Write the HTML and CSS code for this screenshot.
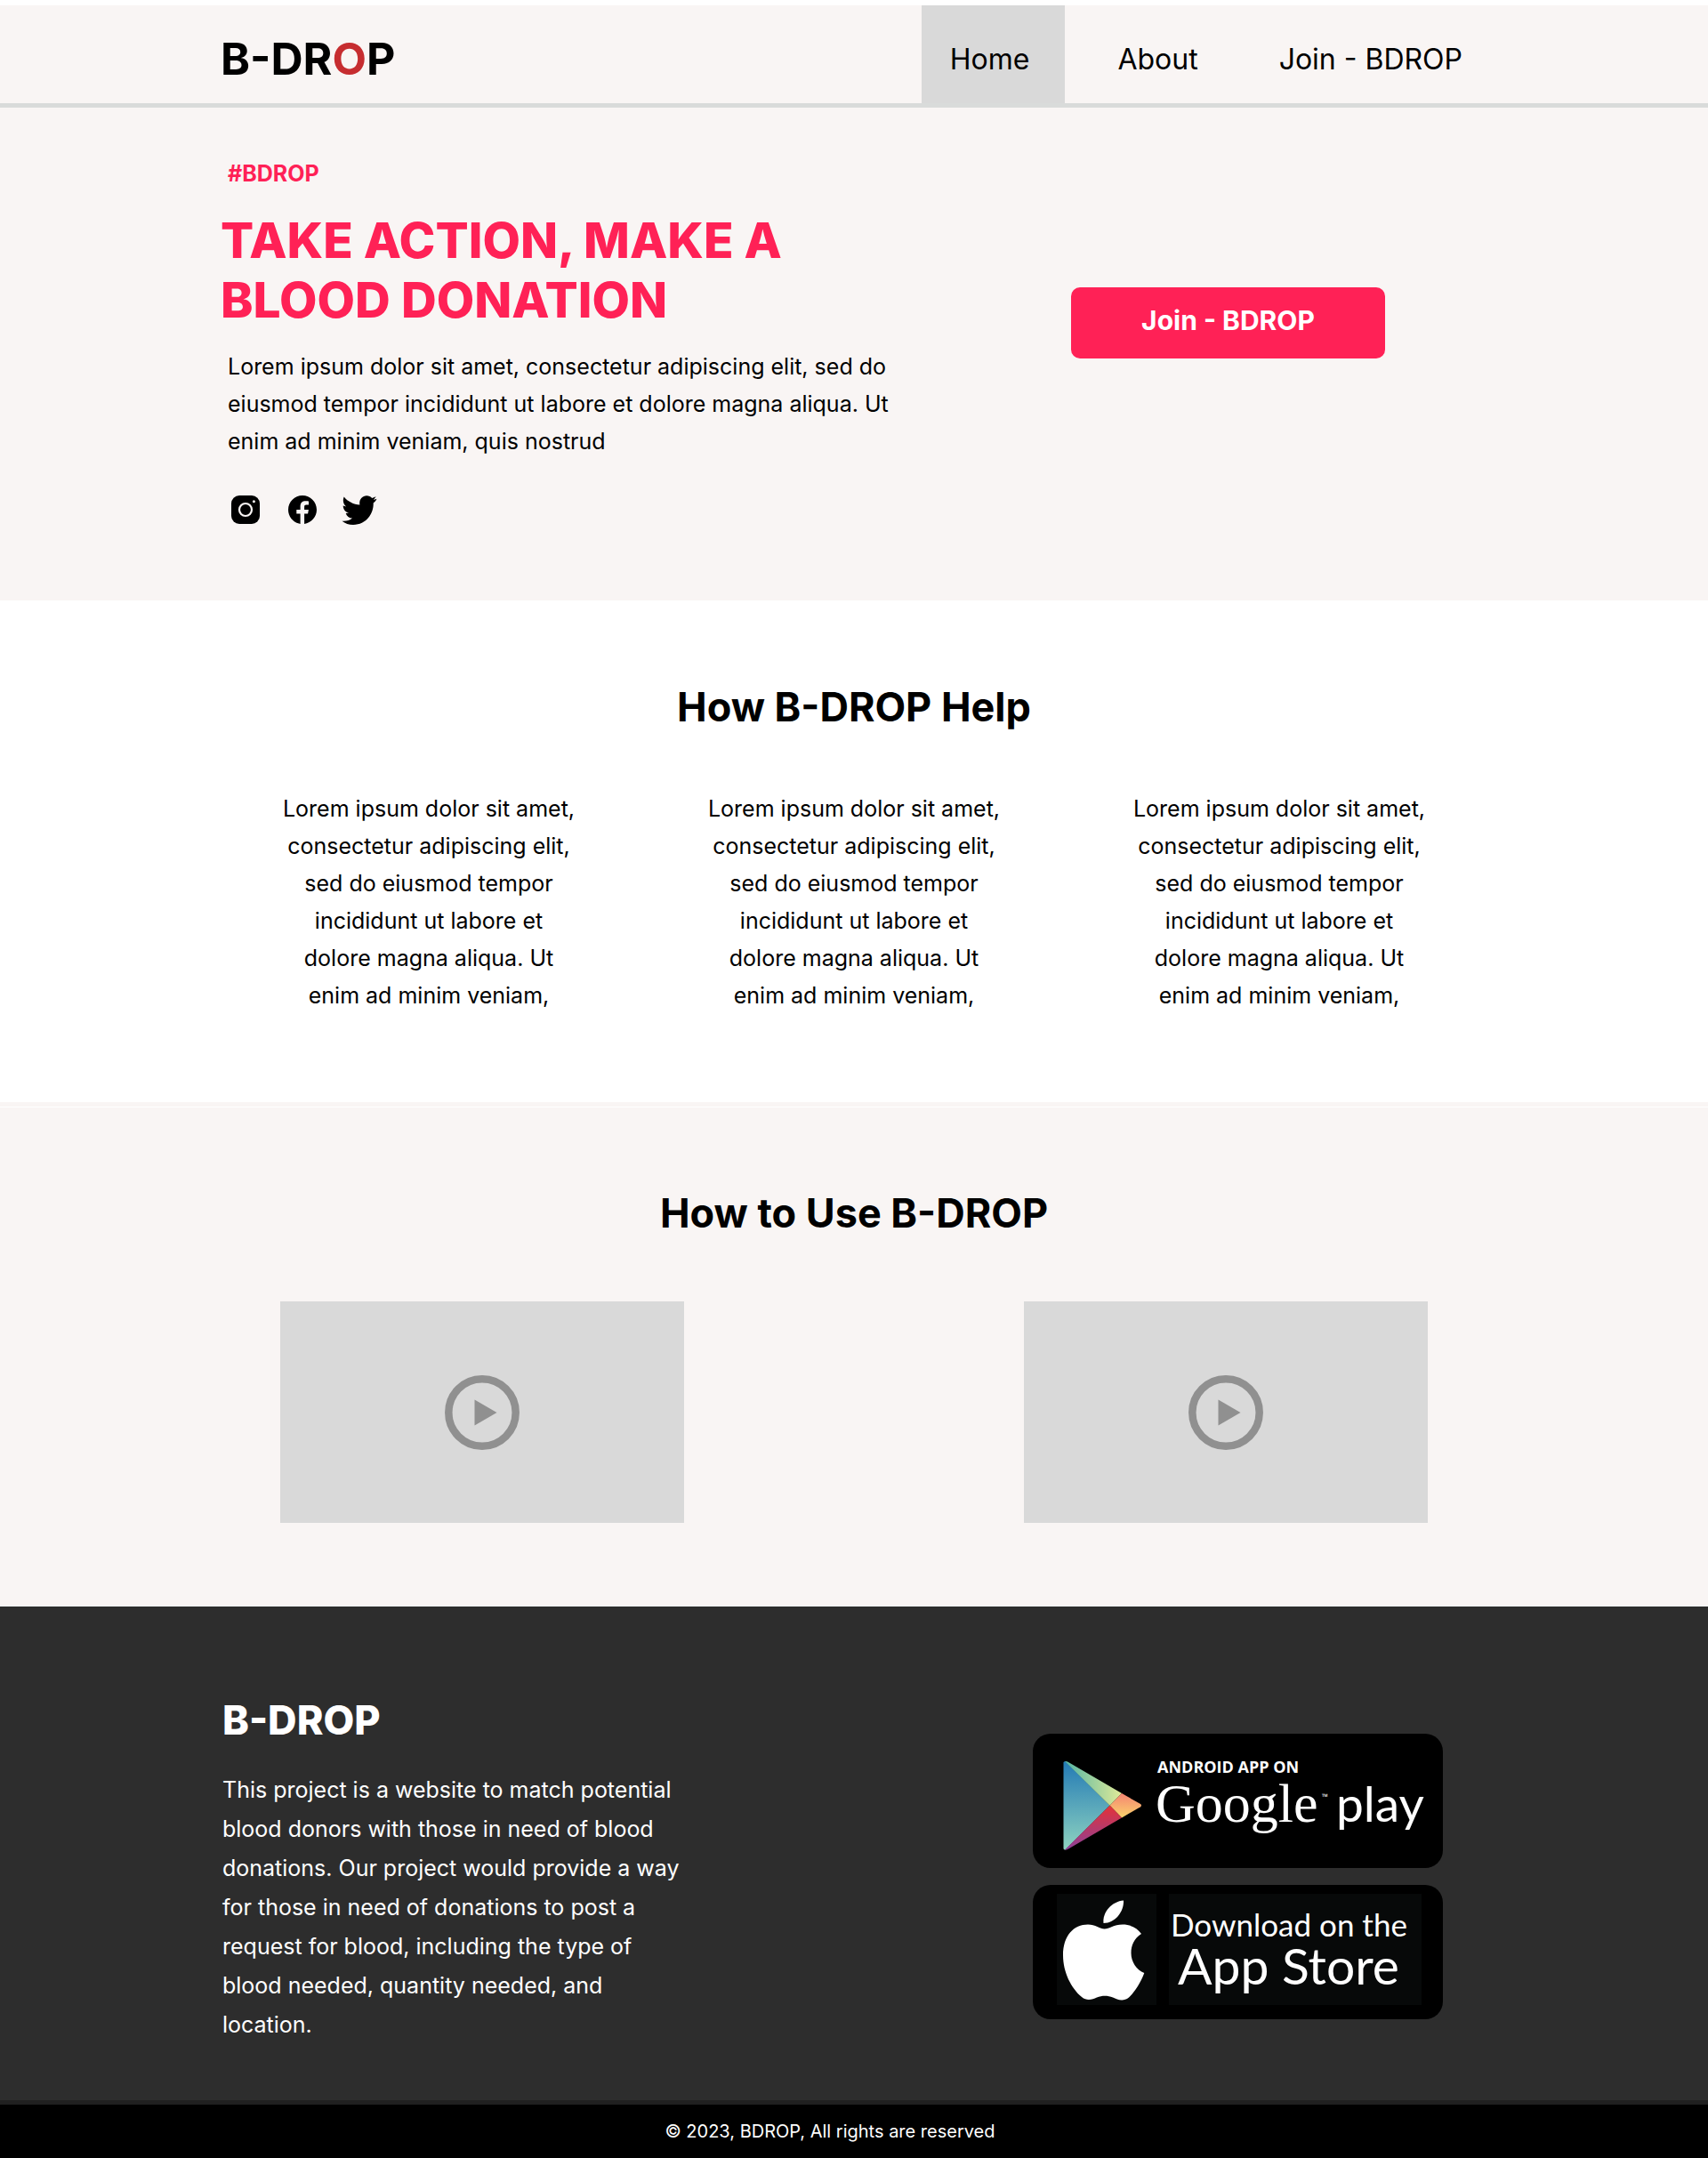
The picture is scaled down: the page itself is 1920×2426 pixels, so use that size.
FILE: index.html
```html
<!DOCTYPE html>
<html lang="en">
<head>
<meta charset="utf-8">
<meta name="viewport" content="width=device-width, initial-scale=1">
<title>B-DROP</title>
<link rel="stylesheet" href="styles.css">
</head>
<body>
<header class="header">
  <div class="container header-row">
    <a class="logo" href="#">B-DR<span class="logo-drop">O</span>P</a>
    <nav class="nav">
      <a class="nav-link nav-link-active" href="#">Home</a>
      <a class="nav-link" href="#help">About</a>
      <a class="nav-link nav-link-join" href="#join">Join - BDROP</a>
    </nav>
  </div>
</header>
<main>
  <section class="hero">
    <div class="container hero-grid">
      <div>
        <p class="tag">#BDROP</p>
        <h1 class="hero-title">TAKE ACTION, MAKE A BLOOD DONATION</h1>
        <p class="hero-text">Lorem ipsum dolor sit amet, consectetur adipiscing elit, sed do eiusmod tempor incididunt ut labore et dolore magna aliqua. Ut enim ad minim veniam, quis nostrud</p>
        <div class="social">
          <a href="#" aria-label="Instagram"><svg class="social-icon" viewBox="0 0 40 40"><rect x="4" y="4" width="32" height="32" rx="9"/><circle cx="20" cy="20" r="7" fill="none" stroke="#f9f5f4" stroke-width="2.2"/><circle cx="29.4" cy="10.8" r="1.5" fill="#f9f5f4"/></svg></a>
          <a href="#" aria-label="Facebook"><svg class="social-icon" viewBox="0 0 40 40"><path d="M36 20.1C36 11.2 28.8 4 20 4S4 11.2 4 20.1c0 7.5 5.100 13.800 12 15.500 .5.100 1.100.200 1.600.300V24.600h-4.300v-4.500h4.300v-3.700c0-4.300 2.200-6.200 6-6.200 1.800 0 2.900.200 3.400.300v4h-2.600c-1.700 0-2.300.800-2.300 2.400v3.200h4.800l-.8 4.500h-4v11.300C30 34.900 36 28.200 36 20.100z"/></svg></a>
          <a href="#" aria-label="Twitter"><svg class="social-icon" viewBox="0 0 40 40"><path d="M39.500 7.800 35.900 8.900 38.600 5.200 34.200 6.900C32.700 5.200 30.600 4.200 28.200 4.200c-4.600 0-8 3.800-8 8.300 0 .7.100 1.400.2 2C13.400 14.200 7 11 2.700 5.600 1.200 8.900 1.400 13.500 5.200 16.600L1.700 15.500c0 3.900 2.500 7.100 6.400 8.200l-3.400.2c1 3.200 3.800 5.400 7.300 5.700C9 32.100 5 33.200.500 32.700 4 35.500 8.200 37 13 37c15 0 23.200-12.700 22.700-24.400C37.300 11.400 38.600 9.700 39.500 7.800z"/></svg></a>
        </div>
      </div>
      <div class="hero-action" id="join">
        <button class="join-button" type="button">Join - BDROP</button>
      </div>
    </div>
  </section>
  <section class="help" id="help">
    <h2 class="section-title">How B-DROP Help</h2>
    <div class="inner help-grid">
      <p>Lorem ipsum dolor sit amet, consectetur adipiscing elit, sed do eiusmod tempor incididunt ut labore et dolore magna aliqua. Ut enim ad minim veniam,</p>
      <p>Lorem ipsum dolor sit amet, consectetur adipiscing elit, sed do eiusmod tempor incididunt ut labore et dolore magna aliqua. Ut enim ad minim veniam,</p>
      <p>Lorem ipsum dolor sit amet, consectetur adipiscing elit, sed do eiusmod tempor incididunt ut labore et dolore magna aliqua. Ut enim ad minim veniam,</p>
    </div>
  </section>
  <section class="usage">
    <h2 class="section-title">How to Use B-DROP</h2>
    <div class="inner video-row">
      <button class="video" type="button" aria-label="Play first video"><svg class="play-icon" viewBox="0 0 84 84"><circle cx="42" cy="42" r="37.700" fill="none" stroke="#909090" stroke-width="8.500"/><path d="M33.500 27.500v29L58.500 42z" fill="#909090"/></svg></button>
      <button class="video" type="button" aria-label="Play second video"><svg class="play-icon" viewBox="0 0 84 84"><circle cx="42" cy="42" r="37.700" fill="none" stroke="#909090" stroke-width="8.500"/><path d="M33.500 27.500v29L58.500 42z" fill="#909090"/></svg></button>
    </div>
  </section>
</main>
<footer class="footer">
  <div class="container footer-row">
    <div class="about">
      <h2 class="footer-title">B-DROP</h2>
      <p class="footer-text">This project is a website to match potential blood donors with those in need of blood donations. Our project would provide a way for those in need of donations to post a request for blood, including the type of blood needed, quantity needed, and location.</p>
    </div>
    <div class="stores">
      <a class="store" href="#" aria-label="Android app on Google Play">
        <svg class="store-art" viewBox="0 0 461 151">
          <defs>
            <linearGradient id="blue" x1="0" y1="0" x2="0" y2="1"><stop offset="0" stop-color="#237ab5"/><stop offset="1" stop-color="#8ed3c0"/></linearGradient>
            <linearGradient id="green" x1="0" y1="0" x2="1" y2="0"><stop offset="0" stop-color="#56b6a4"/><stop offset="1" stop-color="#e0ea98"/></linearGradient>
            <linearGradient id="orange" x1="0" y1="0" x2="0" y2="1"><stop offset="0" stop-color="#f48472"/><stop offset="1" stop-color="#fbd26c"/></linearGradient>
            <linearGradient id="red" x1="0" y1="0" x2="0" y2="1"><stop offset="0" stop-color="#e43238"/><stop offset="1" stop-color="#8c4098"/></linearGradient>
          </defs>
          <path d="M34.500 32.500Q34.500 31 36.500 31L86.500 80.700 36.500 130.500Q34.500 130.500 34.500 129z" fill="url(#blue)"/>
          <path d="M36 31Q38 30.500 40 32L100 67 86.500 80.700z" fill="url(#green)"/>
          <path d="M100 67 121 79Q123 80.700 121 82.300L100 94.500 86.500 80.700z" fill="url(#orange)"/>
          <path d="M86.500 80.700 100 94.500 40 129.500Q38 131 36 130.500z" fill="url(#red)"/>
          <text class="art-android" x="140" y="44">ANDROID APP ON</text>
          <text class="art-google" x="138" y="99">Google</text>
          <text class="art-tm" x="325" y="74">™</text>
          <text class="art-play" x="341" y="99">play</text>
        </svg>
      </a>
      <a class="store" href="#" aria-label="Download on the App Store">
        <svg class="store-art" viewBox="0 0 461 151">
          <path d="M27 10h112v125H27zM153 10h284v125H153z" fill="#070909"/>
          <path d="M102 17.500c.6 12.500-9.500 25.500-22.500 25.500C78 30.500 89 18.500 102 17.500z" fill="#fff"/>
          <path d="M80.500 49.500C86 49.500 91 44.500 101 44.500c9 0 16.500 4 21 10.500-8 5-11.500 13-11.500 21.500 0 10 6 19 14.800 22.500C121 110 115 120 108 126.500c-7 5.500-13 2-18 0-6-2.500-12-2.500-18 0-5 2.200-11 4.500-17-.5C43 116 34 98 34 79c0-22 12-34.500 28-34.500C70 44.500 76 49.500 80.500 49.500z" fill="#fff"/>
          <text class="art-download" x="155" y="58">Download on the</text>
          <text class="art-appstore" x="163" y="112">App Store</text>
        </svg>
      </a>
    </div>
  </div>
  <p class="copyright">© 2023, BDROP, All rights are reserved</p>
</footer>
</body>
</html>
```
FILE: styles.css
```css
* {
  box-sizing: border-box;
}

body {
  margin: 0;
  padding-top: 6px;
  background: #fff;
  color: #000;
  font-family: Inter, "Liberation Sans", sans-serif;
  font-size: 25px;
  line-height: 42px;
}

h1,
h2,
p {
  margin: 0;
}

a {
  color: inherit;
  text-decoration: none;
}

svg {
  display: block;
}

.container {
  max-width: 1424px;
  margin: 0 auto;
}

.inner {
  max-width: 1290px;
  margin: 0 auto;
}

/* Header */
.header {
  background: #f9f5f4;
  border-bottom: 5px solid #d9dbda;
}

.header-row {
  display: flex;
  justify-content: space-between;
  min-height: 110px;
}

.logo {
  display: flex;
  align-items: center;
  padding-top: 10px;
  font-size: 50px;
  font-weight: 700;
  line-height: 60px;
}

.logo-drop {
  color: #c62d30;
}

.nav {
  display: flex;
  gap: 59px;
  padding-right: 28px;
}

.nav-link {
  display: flex;
  align-items: center;
  padding-top: 12px;
  font-size: 32px;
}

.nav-link-active {
  padding-left: 32px;
  padding-right: 40px;
  background: #d9d9d9;
}

.nav-link-join {
  margin-left: 32px;
}

/* Hero */
.hero {
  padding: 59px 0 82px;
  background: #f9f5f4;
}

.hero-grid {
  display: grid;
  grid-template-columns: 1fr 468px;
}

.tag {
  padding-left: 8px;
  color: #ff2156;
  font-weight: 700;
  line-height: 30px;
}

.hero-title {
  max-width: 700px;
  margin: 27px 0 20px;
  color: #ff2156;
  font-size: 55px;
  font-weight: 800;
  line-height: 67px;
}

.hero-text {
  max-width: 788px;
  padding-left: 8px;
}

.social {
  display: flex;
  gap: 24px;
  margin-top: 36px;
  padding-left: 8px;
}

.social-icon {
  width: 40px;
  height: 40px;
}

.hero-action {
  align-self: center;
  padding-bottom: 48px;
}

.join-button {
  width: 353px;
  height: 80px;
  padding: 0 0 6px;
  border: 0;
  border-radius: 10px;
  background: #ff2156;
  color: #fff;
  font-family: inherit;
  font-size: 30px;
  font-weight: 700;
}

/* Sections */
.section-title {
  font-size: 45px;
  font-weight: 700;
  line-height: 54px;
  text-align: center;
}

.help {
  padding: 93px 0 99px;
  border-bottom: 5px solid #f9f5f4;
}

.help-grid {
  display: grid;
  grid-template-columns: repeat(3, 334px);
  justify-content: space-between;
  margin-top: 66px;
  text-align: center;
}

.usage {
  margin-top: 1px;
  padding: 92px 0 93px;
  border-bottom: 1px solid #fff;
  background: #f9f5f4;
}

.video-row {
  display: flex;
  justify-content: space-between;
  margin-top: 72px;
}

.video {
  display: flex;
  align-items: center;
  justify-content: center;
  width: 454px;
  height: 249px;
  padding: 0;
  border: 0;
  background: #d9d9d9;
}

.play-icon {
  width: 84px;
  height: 84px;
}

/* Footer */
.footer {
  background: #2d2d2d;
  color: #fff;
}

.footer-row {
  display: flex;
  justify-content: space-between;
  padding: 101px 50px 63px 2px;
}

.footer-title {
  font-size: 45px;
  font-weight: 800;
  line-height: 54px;
}

.footer-text {
  max-width: 524px;
  margin-top: 29px;
  line-height: 44px;
}

.stores {
  display: flex;
  flex-direction: column;
  gap: 19px;
  padding-top: 42px;
}

.store {
  border-radius: 20px;
  background: #000;
}

.store-art {
  width: 461px;
  height: 151px;
  fill: #fff;
}

.art-android {
  font: 700 18px "Open Sans", sans-serif;
}

.art-google {
  font: 62px "Liberation Serif", serif;
}

.art-tm {
  font: 9px "Open Sans", sans-serif;
}

.art-play {
  font: 55px Lato, sans-serif;
}

.art-download {
  font: 35px Lato, sans-serif;
}

.art-appstore {
  font: 57px Lato, sans-serif;
}

.copyright {
  padding-right: 54px;
  border-top: 5px solid #202020;
  background: #000;
  font-size: 20px;
  line-height: 60px;
  text-align: center;
}
```
